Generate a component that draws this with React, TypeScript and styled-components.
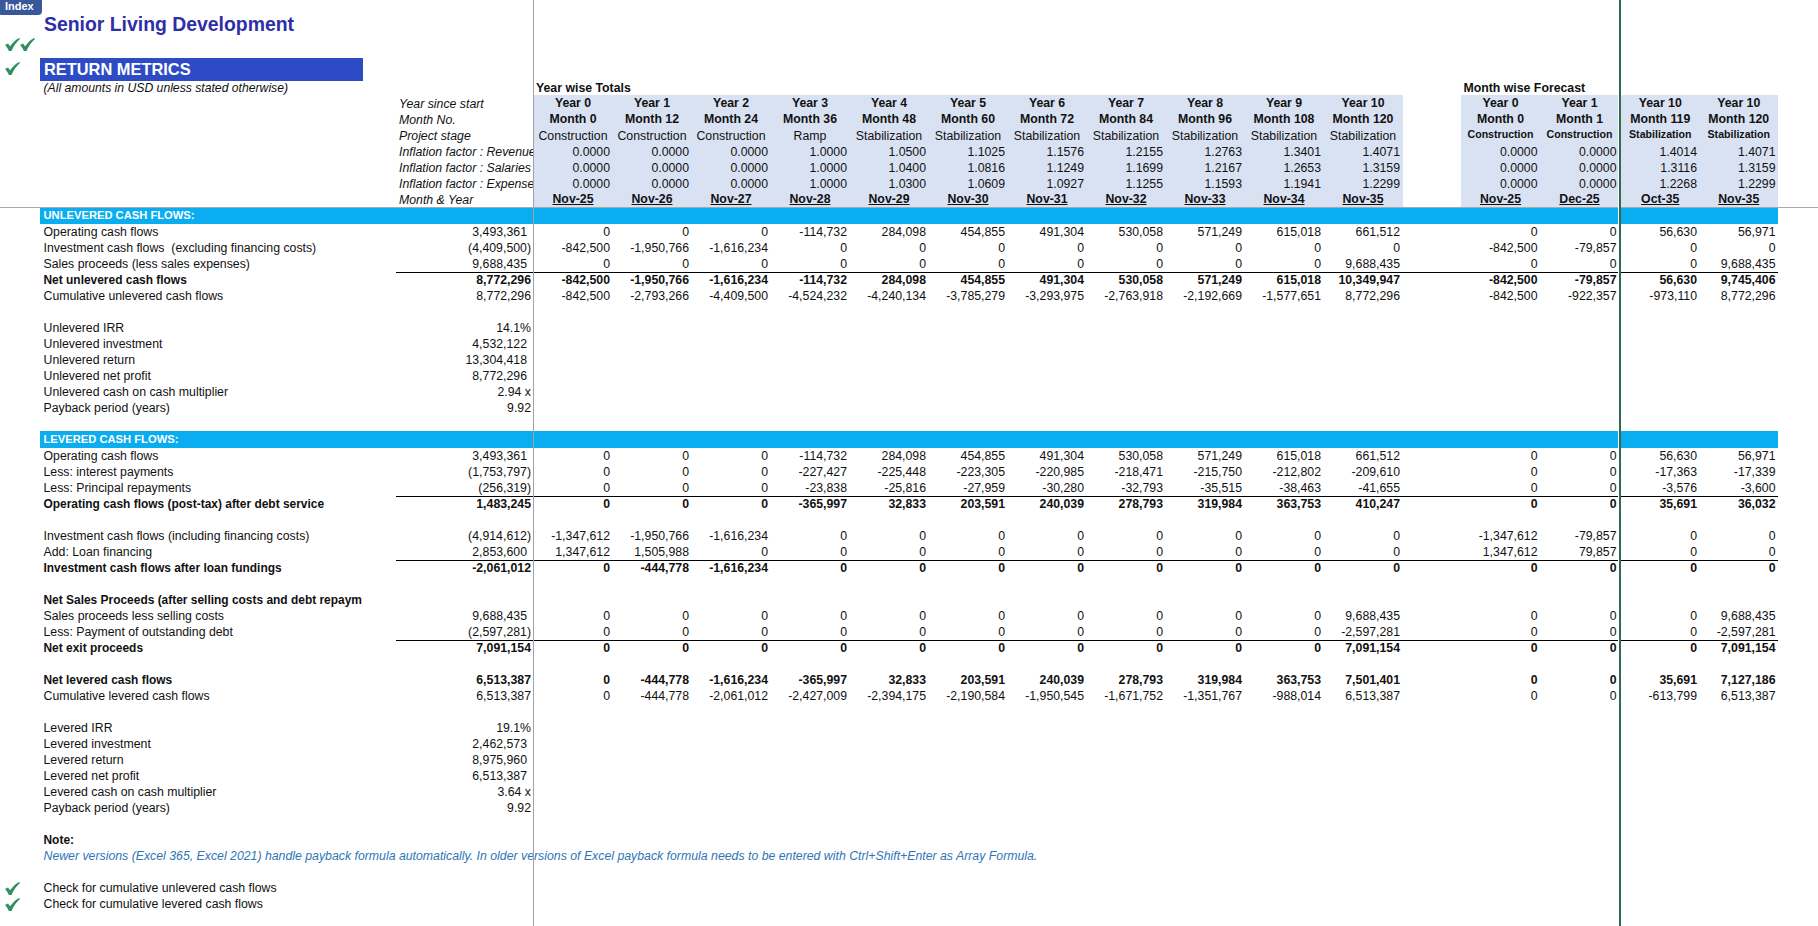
import React from 'react';
import styled, { createGlobalStyle } from 'styled-components';

const GlobalStyle = createGlobalStyle`
  html, body {
    margin: 0;
    padding: 0;
    background: #fff;
    overflow: hidden;
  }
  body {
    font-family: "Liberation Sans", Arial, sans-serif;
    font-size: 12.3px;
    color: #111;
  }
`;

const columns = '40px 323px 33px 137.5px repeat(11, 79px) 58.5px 79px 79px 2px 78.5px 78.5px';
const headerBlue = '#d9e2f3';

const Sheet = styled.div`
  position: relative;
  width: 1818px;
  height: 926px;
  overflow: hidden;
  display: flex;
  flex-direction: column;
`;

const IndexTab = styled.div`
  position: absolute;
  top: 0;
  left: 0;
  width: 37px;
  height: 15px;
  padding-left: 5px;
  background: #38589a;
  border-bottom-right-radius: 4px;
  border-bottom-left-radius: 1px;
  color: #fff;
  font-size: 11px;
  font-weight: bold;
  line-height: 13px;
`;

const TitleBlock = styled.div`
  height: 36px;
  box-sizing: border-box;
  padding: 13px 0 0 44px;
  color: #2e2ea8;
  font-size: 19.4px;
  font-weight: bold;
  line-height: 22px;
`;

const CheckRow = styled.div`
  height: 22px;
  display: flex;
  padding: 2px 0 0 5px;
  box-sizing: border-box;
`;

const HeadingRow = styled.div`
  height: 22px;
  display: grid;
  grid-template-columns: 40px 323px;
`;

const CheckSlot = styled.div`
  padding: 4px 0 0 5px;
`;

const Heading = styled.div`
  background: #2e4bc6;
  color: #fff;
  font-size: 16.4px;
  font-weight: bold;
  line-height: 23px;
  padding-left: 4px;
`;

const Row = styled.div`
  display: grid;
  grid-template-columns: ${columns};
  height: 16px;
  line-height: 16px;
  white-space: pre;
`;

const CheckCell = styled.div`
  padding: 2px 0 0 5px;
`;

const Label = styled.div<{ $bold?: boolean }>`
  grid-column: 2;
  padding-left: 3.5px;
  font-weight: ${p => (p.$bold ? 'bold' : 'normal')};
  font-size: ${p => (p.$bold ? '11.95px' : 'inherit')};
`;

const NoteText = styled.div<{ $bold?: boolean; $link?: boolean }>`
  grid-column: 2 / -1;
  padding-left: 3.5px;
  font-weight: ${p => (p.$bold ? 'bold' : 'normal')};
  font-size: ${p => (p.$bold ? '11.95px' : 'inherit')};
  font-style: ${p => (p.$link ? 'italic' : 'normal')};
  color: ${p => (p.$link ? '#2e75b6' : 'inherit')};
`;

const Subtitle = styled.div`
  grid-column: 2;
  padding-left: 3.5px;
  font-size: 12.2px;
  font-style: italic;
`;

const GroupTitle = styled.div<{ $col: number }>`
  grid-column: ${p => p.$col};
  padding-left: 2.5px;
  font-weight: bold;
`;

const SideLabel = styled.div`
  grid-column: 4;
  padding-left: 3px;
  font-style: italic;
`;

const BlueCell = styled.div<{ $kind: 'title' | 'stage' | 'small' | 'factor' | 'date'; $first?: boolean }>`
  background: ${headerBlue};
  box-shadow: ${p => (p.$first ? `0 -1px 0 ${headerBlue}` : 'none')};
  text-align: ${p => (p.$kind === 'factor' ? 'right' : 'center')};
  padding-right: ${p => (p.$kind === 'factor' ? '2.5px' : '0')};
  font-weight: ${p => (p.$kind === 'title' || p.$kind === 'date' || p.$kind === 'small' ? 'bold' : 'normal')};
  font-size: ${p => (p.$kind === 'small' ? '10.6px' : 'inherit')};
  line-height: ${p => (p.$kind === 'title' || p.$kind === 'date' ? '14px' : p.$kind === 'small' ? '12px' : '16px')};
  text-decoration: ${p => (p.$kind === 'date' ? 'underline' : 'none')};
`;

const RuleCell = styled.div<{ $ruled?: boolean }>`
  box-sizing: border-box;
  border-bottom: ${p => (p.$ruled ? '1px solid #000' : 'none')};
`;

const Total = styled(RuleCell)<{ $bold?: boolean; $pad?: boolean }>`
  grid-column: 4;
  text-align: right;
  padding-right: ${p => (p.$pad ? '6.5px' : '2.5px')};
  font-weight: ${p => (p.$bold ? 'bold' : 'normal')};
`;

const Value = styled(RuleCell)<{ $bold?: boolean }>`
  text-align: right;
  padding-right: 2.5px;
  font-weight: ${p => (p.$bold ? 'bold' : 'normal')};
`;

const SectionBar = styled.div`
  grid-column: 2 / -1;
  background: #0aadf0;
  box-shadow: 0 -1px 0 #0aadf0;
  color: #fff;
  font-size: 11.2px;
  font-weight: bold;
  padding-left: 3.5px;
  line-height: 15px;
`;

const FrozenColumn = styled.div`
  position: absolute;
  top: 0;
  bottom: 0;
  left: 533px;
  width: 1px;
  background: #a2a2a2;
`;

const FrozenRow = styled.div`
  position: absolute;
  top: 207px;
  left: 0;
  right: 0;
  height: 1px;
  background: #a8a8a8;
`;

const SplitLine = styled.div`
  position: absolute;
  top: 0;
  bottom: 0;
  left: 1618px;
  width: 2px;
  background: #2f6b4f;
  border-left: 1px solid #fff;
`;

function Check() {
  return (
    <svg width="15" height="13" viewBox="0 0 15 14" preserveAspectRatio="none" style={{ display: 'block' }}>
      <path
        d="M0 7.6 L3 6 L5 9 C7.5 5.4 10.5 2 14.2 0 L15 1 C11.5 4 8.5 9 6.5 14 L3.8 14 C3 11.5 1.5 9.3 0 7.6Z"
        fill="#2f8f5f"
      />
    </svg>
  );
}

// one value per visible column: 11 years, then 2 + 2 months
type Line = { label: string; total: string; values: string[]; bold?: boolean; pad?: boolean; ruled?: boolean };

const zeros = (n: number) => Array(n).fill('0');

const years = ['Year 0', 'Year 1', 'Year 2', 'Year 3', 'Year 4', 'Year 5', 'Year 6', 'Year 7', 'Year 8', 'Year 9', 'Year 10', 'Year 0', 'Year 1', 'Year 10', 'Year 10'];
const months = ['Month 0', 'Month 12', 'Month 24', 'Month 36', 'Month 48', 'Month 60', 'Month 72', 'Month 84', 'Month 96', 'Month 108', 'Month 120', 'Month 0', 'Month 1', 'Month 119', 'Month 120'];
const stages = ['Construction', 'Construction', 'Construction', 'Ramp', 'Stabilization', 'Stabilization', 'Stabilization', 'Stabilization', 'Stabilization', 'Stabilization', 'Stabilization', 'Construction', 'Construction', 'Stabilization', 'Stabilization'];
const revenue = ['0.0000', '0.0000', '0.0000', '1.0000', '1.0500', '1.1025', '1.1576', '1.2155', '1.2763', '1.3401', '1.4071', '0.0000', '0.0000', '1.4014', '1.4071'];
const salaries = ['0.0000', '0.0000', '0.0000', '1.0000', '1.0400', '1.0816', '1.1249', '1.1699', '1.2167', '1.2653', '1.3159', '0.0000', '0.0000', '1.3116', '1.3159'];
const expenses = ['0.0000', '0.0000', '0.0000', '1.0000', '1.0300', '1.0609', '1.0927', '1.1255', '1.1593', '1.1941', '1.2299', '0.0000', '0.0000', '1.2268', '1.2299'];
const dates = ['Nov-25', 'Nov-26', 'Nov-27', 'Nov-28', 'Nov-29', 'Nov-30', 'Nov-31', 'Nov-32', 'Nov-33', 'Nov-34', 'Nov-35', 'Nov-25', 'Dec-25', 'Oct-35', 'Nov-35'];

const operating = ['0', '0', '0', '-114,732', '284,098', '454,855', '491,304', '530,058', '571,249', '615,018', '661,512', '0', '0', '56,630', '56,971'];

const unlevered: Line[] = [
  { label: 'Operating cash flows', total: '3,493,361', pad: true, values: operating },
  { label: 'Investment cash flows  (excluding financing costs)', total: '(4,409,500)', values: ['-842,500', '-1,950,766', '-1,616,234', ...zeros(8), '-842,500', '-79,857', '0', '0'] },
  { label: 'Sales proceeds (less sales expenses)', total: '9,688,435', pad: true, ruled: true, values: [...zeros(10), '9,688,435', '0', '0', '0', '9,688,435'] },
  { label: 'Net unlevered cash flows', total: '8,772,296', bold: true, values: ['-842,500', '-1,950,766', '-1,616,234', '-114,732', '284,098', '454,855', '491,304', '530,058', '571,249', '615,018', '10,349,947', '-842,500', '-79,857', '56,630', '9,745,406'] },
  { label: 'Cumulative unlevered cash flows', total: '8,772,296', values: ['-842,500', '-2,793,266', '-4,409,500', '-4,524,232', '-4,240,134', '-3,785,279', '-3,293,975', '-2,763,918', '-2,192,669', '-1,577,651', '8,772,296', '-842,500', '-922,357', '-973,110', '8,772,296'] },
];

const operatingService: Line[] = [
  { label: 'Operating cash flows', total: '3,493,361', pad: true, values: operating },
  { label: 'Less: interest payments', total: '(1,753,797)', values: ['0', '0', '0', '-227,427', '-225,448', '-223,305', '-220,985', '-218,471', '-215,750', '-212,802', '-209,610', '0', '0', '-17,363', '-17,339'] },
  { label: 'Less: Principal repayments', total: '(256,319)', ruled: true, values: ['0', '0', '0', '-23,838', '-25,816', '-27,959', '-30,280', '-32,793', '-35,515', '-38,463', '-41,655', '0', '0', '-3,576', '-3,600'] },
  { label: 'Operating cash flows (post-tax) after debt service', total: '1,483,245', bold: true, values: ['0', '0', '0', '-365,997', '32,833', '203,591', '240,039', '278,793', '319,984', '363,753', '410,247', '0', '0', '35,691', '36,032'] },
];

const investment: Line[] = [
  { label: 'Investment cash flows (including financing costs)', total: '(4,914,612)', values: ['-1,347,612', '-1,950,766', '-1,616,234', ...zeros(8), '-1,347,612', '-79,857', '0', '0'] },
  { label: 'Add: Loan financing', total: '2,853,600', pad: true, ruled: true, values: ['1,347,612', '1,505,988', ...zeros(9), '1,347,612', '79,857', '0', '0'] },
  { label: 'Investment cash flows after loan fundings', total: '-2,061,012', bold: true, values: ['0', '-444,778', '-1,616,234', ...zeros(12)] },
];

const exitLines: Line[] = [
  { label: 'Sales proceeds less selling costs', total: '9,688,435', pad: true, values: [...zeros(10), '9,688,435', '0', '0', '0', '9,688,435'] },
  { label: 'Less: Payment of outstanding debt', total: '(2,597,281)', ruled: true, values: [...zeros(10), '-2,597,281', '0', '0', '0', '-2,597,281'] },
  { label: 'Net exit proceeds', total: '7,091,154', bold: true, values: [...zeros(10), '7,091,154', '0', '0', '0', '7,091,154'] },
];

const netLevered: Line[] = [
  { label: 'Net levered cash flows', total: '6,513,387', bold: true, values: ['0', '-444,778', '-1,616,234', '-365,997', '32,833', '203,591', '240,039', '278,793', '319,984', '363,753', '7,501,401', '0', '0', '35,691', '7,127,186'] },
  { label: 'Cumulative levered cash flows', total: '6,513,387', values: ['0', '-444,778', '-2,061,012', '-2,427,009', '-2,394,175', '-2,190,584', '-1,950,545', '-1,671,752', '-1,351,767', '-988,014', '6,513,387', '0', '0', '-613,799', '6,513,387'] },
];

const unleveredMetrics = [
  ['Unlevered IRR', '14.1%', false],
  ['Unlevered investment', '4,532,122', true],
  ['Unlevered return', '13,304,418', true],
  ['Unlevered net profit', '8,772,296', true],
  ['Unlevered cash on cash multiplier', '2.94 x', false],
  ['Payback period (years)', '9.92', false],
] as const;

const leveredMetrics = [
  ['Levered IRR', '19.1%', false],
  ['Levered investment', '2,462,573', true],
  ['Levered return', '8,975,960', true],
  ['Levered net profit', '6,513,387', true],
  ['Levered cash on cash multiplier', '3.64 x', false],
  ['Payback period (years)', '9.92', false],
] as const;

// places the cells into year columns, the hidden gutter and the split gap
function spread(cells: string[], render: (text: string, i: number) => React.ReactNode, gap: (key: string) => React.ReactNode) {
  return [
    ...cells.slice(0, 11).map(render),
    gap('gutter'),
    ...cells.slice(11, 13).map((c, i) => render(c, i + 11)),
    gap('split'),
    ...cells.slice(13).map((c, i) => render(c, i + 13)),
  ];
}

function HeaderRow({ side, cells, kind, first }: { side: string; cells: string[]; kind: 'title' | 'stage' | 'factor' | 'date'; first?: boolean }) {
  return (
    <Row>
      <SideLabel>{side}</SideLabel>
      {spread(
        cells,
        (text, i) => (
          <BlueCell key={i} $kind={kind === 'stage' && i > 10 ? 'small' : kind} $first={first}>
            {text}
          </BlueCell>
        ),
        key => <div key={key} />,
      )}
    </Row>
  );
}

function DataRow({ line }: { line: Line }) {
  return (
    <Row>
      <Label $bold={line.bold}>{line.label}</Label>
      <Total $bold={line.bold} $pad={line.pad} $ruled={line.ruled}>
        {line.total}
      </Total>
      {spread(
        line.values,
        (text, i) => (
          <Value key={i} $bold={line.bold} $ruled={line.ruled}>
            {text}
          </Value>
        ),
        key => <RuleCell key={key} $ruled={line.ruled} />,
      )}
    </Row>
  );
}

function MetricRows({ rows }: { rows: readonly (readonly [string, string, boolean])[] }) {
  return (
    <>
      {rows.map(([label, value, pad]) => (
        <Row key={label}>
          <Label>{label}</Label>
          <Total $pad={pad}>{value}</Total>
        </Row>
      ))}
    </>
  );
}

export default function App() {
  return (
    <Sheet>
      <GlobalStyle />
      <TitleBlock>Senior Living Development</TitleBlock>
      <CheckRow>
        <Check />
        <Check />
      </CheckRow>
      <HeadingRow>
        <CheckSlot>
          <Check />
        </CheckSlot>
        <Heading>RETURN METRICS</Heading>
      </HeadingRow>

      <Row>
        <Subtitle>(All amounts in USD unless stated otherwise)</Subtitle>
        <GroupTitle $col={5}>Year wise Totals</GroupTitle>
        <GroupTitle $col={17}>Month wise Forecast</GroupTitle>
      </Row>
      <HeaderRow side="Year since start" cells={years} kind="title" first />
      <HeaderRow side="Month No." cells={months} kind="title" />
      <HeaderRow side="Project stage" cells={stages} kind="stage" />
      <HeaderRow side="Inflation factor : Revenue" cells={revenue} kind="factor" />
      <HeaderRow side="Inflation factor : Salaries" cells={salaries} kind="factor" />
      <HeaderRow side="Inflation factor : Expense" cells={expenses} kind="factor" />
      <HeaderRow side="Month & Year" cells={dates} kind="date" />

      <Row>
        <SectionBar>UNLEVERED CASH FLOWS:</SectionBar>
      </Row>
      {unlevered.map(line => <DataRow key={line.label} line={line} />)}
      <Row />
      <MetricRows rows={unleveredMetrics} />
      <Row />

      <Row>
        <SectionBar>LEVERED CASH FLOWS:</SectionBar>
      </Row>
      {operatingService.map(line => <DataRow key={line.label} line={line} />)}
      <Row />
      {investment.map(line => <DataRow key={line.label} line={line} />)}
      <Row />
      <Row>
        <Label $bold>Net Sales Proceeds (after selling costs and debt repaym</Label>
      </Row>
      {exitLines.map(line => <DataRow key={line.label} line={line} />)}
      <Row />
      {netLevered.map(line => <DataRow key={line.label} line={line} />)}
      <Row />
      <MetricRows rows={leveredMetrics} />
      <Row />

      <Row>
        <NoteText $bold>Note:</NoteText>
      </Row>
      <Row>
        <NoteText $link>
          Newer versions (Excel 365, Excel 2021) handle payback formula automatically. In older versions of Excel payback formula needs to be entered with Ctrl+Shift+Enter as Array Formula.
        </NoteText>
      </Row>
      <Row />
      <Row>
        <CheckCell>
          <Check />
        </CheckCell>
        <Label>Check for cumulative unlevered cash flows</Label>
      </Row>
      <Row>
        <CheckCell>
          <Check />
        </CheckCell>
        <Label>Check for cumulative levered cash flows</Label>
      </Row>

      <IndexTab>Index</IndexTab>
      <FrozenColumn />
      <FrozenRow />
      <SplitLine />
    </Sheet>
  );
}
